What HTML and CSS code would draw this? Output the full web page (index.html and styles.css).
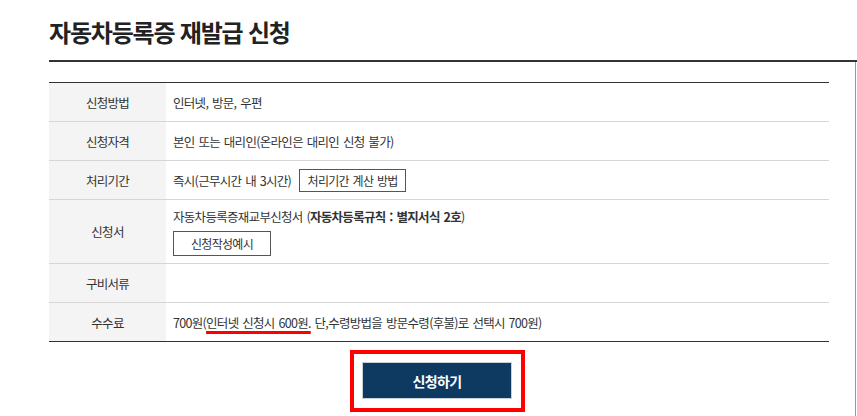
FILE: index.html
```html
<!DOCTYPE html>
<html lang="ko">
<head>
<meta charset="utf-8">
<title>자동차등록증 재발급 신청</title>
<link rel="stylesheet" href="styles.css">
</head>
<body>
<div class="page">
  <h1 class="title">자동차등록증 재발급 신청</h1>
  <div class="title-rule"></div>
  <div class="content">
    <div class="main">
      <div class="info">
        <div class="row">
          <div class="label">신청방법</div>
          <div class="value">인터넷, 방문, 우편</div>
        </div>
        <div class="row">
          <div class="label">신청자격</div>
          <div class="value">본인 또는 대리인(온라인은 대리인 신청 불가)</div>
        </div>
        <div class="row">
          <div class="label">처리기간</div>
          <div class="value inline">즉시(근무시간 내 3시간) <span class="btn-line">처리기간 계산 방법</span></div>
        </div>
        <div class="row tall">
          <div class="label">신청서</div>
          <div class="value stack">
            <div>자동차등록증재교부신청서 (<b>자동차등록규칙 : 별지서식 2호</b>)</div>
            <span class="btn-line wide">신청작성예시</span>
          </div>
        </div>
        <div class="row">
          <div class="label">구비서류</div>
          <div class="value"></div>
        </div>
        <div class="row last">
          <div class="label">수수료</div>
          <div class="value">700원(<span class="mark">인터넷 신청시 600원.</span>&nbsp;단,수령방법을 방문수령(후불)로 선택시 700원)</div>
        </div>
      </div>
      <div class="actions">
        <div class="highlight">
          <button class="submit" type="button">신청하기</button>
        </div>
      </div>
    </div>
  </div>
</div>
</body>
</html>
```

FILE: styles.css
```css
html, body {
  margin: 0;
  padding: 0;
  background: #fff;
}
body {
  font-family: "Noto Sans CJK KR", "Noto Sans", sans-serif;
  color: #333;
  font-size: 12.5px;
  letter-spacing: -0.7px;
  word-spacing: 1px;
}
.page {
  padding-left: 49px;
}
.title {
  margin: 0;
  padding-top: 18px;
  height: 28px;
  line-height: 28px;
  font-size: 24px;
  font-weight: 700;
  color: #222;
  letter-spacing: -1.2px;
  word-spacing: 0;
}
.title-rule {
  margin-top: 14px;
  height: 2px;
  background: #333;
}
.content {
  margin-right: 1px;
  border-right: 1px solid #999;
  height: 354px;
}
.main {
  width: 780px;
  padding-top: 20px;
}
.info {
  border-top: 1px solid #333;
  border-bottom: 1px solid #333;
}
.row {
  display: grid;
  grid-template-columns: 117px 1fr;
  min-height: 38px;
  border-bottom: 1px solid #d6d6d6;
}
.row.last {
  border-bottom: 0;
}
.row.tall {
  min-height: 63px;
}
.label {
  background: #f4f4f4;
  display: flex;
  align-items: center;
  justify-content: center;
}
.value {
  display: flex;
  align-items: center;
  padding-left: 7px;
}
.value.inline {
  gap: 8px;
}
.value.stack {
  flex-direction: column;
  align-items: flex-start;
  justify-content: flex-start;
  padding-top: 7px;
  gap: 5px;
}
.btn-line {
  display: inline-flex;
  align-items: center;
  justify-content: center;
  box-sizing: border-box;
  width: 107px;
  height: 23px;
  border: 1px solid #555;
  font-size: 12px;
  color: #333;
  background: #fff;
}
.btn-line.wide {
  width: 98px;
  height: 25px;
}
.mark {
  text-decoration: underline;
  text-decoration-color: #f00;
  text-decoration-thickness: 3px;
  text-underline-offset: 3px;
}
.actions {
  display: flex;
  justify-content: center;
  padding-top: 8px;
  padding-right: 3px;
}
.highlight {
  border: 4px solid #f00;
  padding: 8px 9px 9px 8px;
}
.submit {
  display: block;
  width: 150px;
  height: 37px;
  margin: 0;
  border: 1px solid #c8d0d9;
  background: #0e3961;
  color: #fff;
  font-family: "Noto Sans CJK KR", "Noto Sans", sans-serif;
  font-size: 14px;
  font-weight: 700;
  letter-spacing: -0.6px;
}
```
